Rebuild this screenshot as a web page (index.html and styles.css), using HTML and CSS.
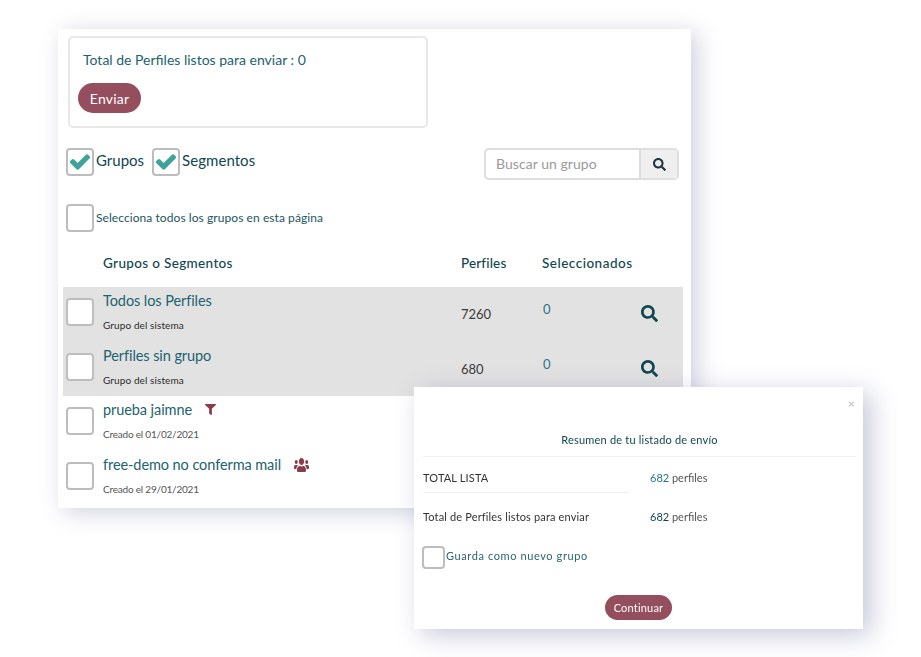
FILE: index.html
```html
<!DOCTYPE html>
<html lang="es">
<head>
    <meta charset="UTF-8">
    <meta name="viewport" content="width=device-width, initial-scale=1.0">
    <title>Resumen de envío</title>
    <link rel="stylesheet" href="styles.css">
</head>
<body>
    <svg class="icon-defs" aria-hidden="true">
        <symbol id="i-search" viewBox="0 0 512 512"><path d="M505 442.7L405.3 343c-4.5-4.5-10.6-7-17-7H372c27.6-35.3 44-79.7 44-128C416 93.1 322.9 0 208 0S0 93.1 0 208s93.1 208 208 208c48.3 0 92.7-16.4 128-44v16.3c0 6.4 2.5 12.5 7 17l99.7 99.7c9.4 9.4 24.6 9.4 33.9 0l28.3-28.3c9.4-9.4 9.4-24.6.1-34zM208 336c-70.7 0-128-57.2-128-128 0-70.7 57.2-128 128-128 70.7 0 128 57.2 128 128 0 70.7-57.2 128-128 128z"/></symbol>
        <symbol id="i-check" viewBox="-20 -20 552 552"><path d="M173.898 439.404l-166.4-166.4c-9.997-9.997-9.997-26.206 0-36.204l36.203-36.204c9.997-9.998 26.207-9.998 36.204 0L192 312.69 432.095 72.596c9.997-9.997 26.207-9.997 36.204 0l36.203 36.204c9.997 9.997 9.997 26.206 0 36.204l-294.4 294.401c-9.998 9.997-26.207 9.997-36.204-.001z"/></symbol>
        <symbol id="i-filter" viewBox="0 0 512 512"><path d="M487.976 0H24.028C2.71 0-8.047 25.866 7.058 40.971L192 225.941V432c0 7.831 3.821 15.17 10.237 19.662l80 55.98C298.02 518.69 320 507.493 320 487.98V225.941l184.947-184.97C520.021 25.896 509.338 0 487.976 0z"/></symbol>
        <symbol id="i-users" viewBox="0 32 640 448" preserveAspectRatio="none"><path d="M96 224c35.3 0 64-28.7 64-64s-28.7-64-64-64-64 28.7-64 64 28.7 64 64 64zm448 0c35.3 0 64-28.7 64-64s-28.7-64-64-64-64 28.7-64 64 28.7 64 64 64zm32 32h-64c-17.6 0-33.5 7.1-45.1 18.6 40.3 22.1 68.9 62 75.1 109.4h66c17.7 0 32-14.3 32-32v-32c0-35.3-28.7-64-64-64zm-256 0c61.9 0 112-50.1 112-112S381.9 32 320 32 208 82.1 208 144s50.1 112 112 112zm76.8 32h-8.3c-20.8 10-43.9 16-68.5 16s-47.6-6-68.5-16h-8.3C179.6 288 128 339.6 128 403.2V432c0 26.5 21.5 48 48 48h288c26.5 0 48-21.5 48-48v-28.8c0-63.6-51.6-115.2-115.2-115.2zm-223.7-13.4C161.5 263.1 145.6 256 128 256H64c-35.3 0-64 28.7-64 64v32c0 17.7 14.3 32 32 32h65.9c6.3-47.4 34.9-87.3 75.2-109.4z"/></symbol>
    </svg>

    <div class="card">
        <div class="send-box">
            <p class="send-total">Total de Perfiles listos para enviar : 0</p>
            <button class="btn-send">Enviar</button>
        </div>

        <div class="filters">
            <span class="box"><svg class="icon-check"><use href="#i-check"/></svg></span>
            <span class="filter-label">Grupos</span>
            <span class="box box-second"><svg class="icon-check"><use href="#i-check"/></svg></span>
            <span class="filter-label filter-label-narrow">Segmentos</span>
            <div class="search">
                <span class="search-text">Buscar un grupo</span>
                <span class="search-btn"><svg class="icon-search-small"><use href="#i-search"/></svg></span>
            </div>
        </div>

        <div class="select-all">
            <span class="box"></span>
            <span class="select-all-label">Selecciona todos los grupos en esta página</span>
        </div>

        <div class="table-head">
            <span class="col-name">Grupos o Segmentos</span>
            <span class="col-count">Perfiles</span>
            <span>Seleccionados</span>
        </div>

        <div class="row row-grey">
            <span class="box"></span>
            <div class="row-info">
                <div class="row-title">Todos los Perfiles</div>
                <div class="row-sub row-sub-dark">Grupo del sistema</div>
            </div>
            <span class="row-count">7260</span>
            <span class="row-selected">0</span>
            <svg class="icon-search"><use href="#i-search"/></svg>
        </div>
        <div class="row row-grey">
            <span class="box"></span>
            <div class="row-info">
                <div class="row-title">Perfiles sin grupo</div>
                <div class="row-sub row-sub-dark">Grupo del sistema</div>
            </div>
            <span class="row-count">680</span>
            <span class="row-selected">0</span>
            <svg class="icon-search"><use href="#i-search"/></svg>
        </div>
        <div class="row">
            <span class="box"></span>
            <div class="row-info">
                <div class="row-title">prueba jaimne <svg class="icon-filter"><use href="#i-filter"/></svg></div>
                <div class="row-sub">Creado el 01/02/2021</div>
            </div>
        </div>
        <div class="row">
            <span class="box"></span>
            <div class="row-info">
                <div class="row-title">free-demo no conferma mail <svg class="icon-users"><use href="#i-users"/></svg></div>
                <div class="row-sub">Creado el 29/01/2021</div>
            </div>
        </div>
    </div>

    <div class="modal">
        <div class="modal-close">×</div>
        <div class="modal-title">Resumen de tu listado de envío</div>
        <div class="modal-line">
            <span class="modal-label modal-label-total">TOTAL LISTA</span>
            <span class="modal-value"><span class="modal-num">682</span> perfiles</span>
        </div>
        <div class="modal-line">
            <span class="modal-label">Total de Perfiles listos para enviar</span>
            <span class="modal-value"><span class="modal-num modal-num-dark">682</span> perfiles</span>
        </div>
        <div class="modal-save">
            <span class="box box-small"></span>
            <span class="modal-save-label">Guarda como nuevo grupo</span>
        </div>
        <div class="modal-actions">
            <button class="btn-continue">Continuar</button>
        </div>
    </div>
</body>
</html>
```

FILE: styles.css
```css
body {
    font-family: "Lato", "Open Sans", sans-serif;
    background-color: #fff;
    margin: 0;
    padding: 29px 0 0 58px;
    height: 628px;
    overflow: hidden;
    color: #0f4650;
}
.icon-defs {
    display: none;
}
.card {
    background-color: #fff;
    width: 633px;
    height: 479px;
    padding: 7px 0 0 5px;
    box-sizing: border-box;
    box-shadow: 6px 4px 22px rgba(105, 110, 160, 0.32);
}
.send-box {
    width: 360px;
    height: 92px;
    margin-left: 5px;
    box-sizing: border-box;
    border: 2px solid #e8e8e8;
    border-radius: 5px;
    padding: 12px 0 0 8px;
}
.send-total {
    margin: 0 0 13px 5px;
    font-size: 14px;
    line-height: 20px;
    color: #1c6270;
}
.btn-send {
    background-color: #944e5e;
    color: #fff;
    border: none;
    border-radius: 15px;
    width: 63px;
    height: 30px;
    padding: 0;
    font-family: inherit;
    font-size: 14px;
    letter-spacing: 0.2px;
}
.box {
    display: flex;
    align-items: center;
    justify-content: center;
    flex: none;
    width: 28px;
    height: 28px;
    box-sizing: border-box;
    border: 2px solid #bdbdbd;
    border-radius: 4px;
    background-color: #fff;
}
.icon-check {
    width: 20px;
    height: 20px;
    fill: #3fa39b;
    stroke: #3fa39b;
    stroke-width: 40px;
}
.filters {
    display: flex;
    align-items: flex-start;
    height: 32px;
    margin: 20px 0 0 3px;
}
.filter-label {
    margin-left: 2px;
    font-size: 15px;
    line-height: 25px;
}
.filter-label-narrow {
    letter-spacing: 0.05px;
}
.box-second {
    margin-left: 8px;
}
.search {
    display: flex;
    width: 195px;
    height: 32px;
    box-sizing: border-box;
    margin-left: auto;
    margin-right: 12px;
    border: 2px solid #dedede;
    border-radius: 5px;
}
.search-text {
    flex-grow: 1;
    padding-left: 10px;
    font-size: 14px;
    line-height: 28px;
    color: #9a9a9a;
    letter-spacing: 0.05px;
}
.search-btn {
    display: flex;
    align-items: center;
    justify-content: center;
    width: 36px;
    background-color: #efefef;
    border-left: 2px solid #dedede;
}
.icon-search-small {
    width: 13px;
    height: 13px;
    fill: #22343c;
}
.select-all {
    display: flex;
    align-items: center;
    margin: 24px 0 0 3px;
}
.select-all-label {
    margin-left: 2px;
    padding-bottom: 2px;
    font-size: 12px;
    color: #1c5560;
    letter-spacing: 0.07px;
}
.table-head {
    display: flex;
    align-items: center;
    height: 55px;
    padding-top: 6px;
    box-sizing: border-box;
    margin-left: 40px;
    font-size: 13.5px;
    font-weight: 500;
    letter-spacing: 0.5px;
    color: #0f4650;
}
.col-name {
    width: 358px;
    letter-spacing: 0.35px;
}
.col-count {
    width: 81px;
    letter-spacing: 0.15px;
}
.row {
    display: flex;
    height: 54.5px;
    padding-left: 3px;
}
.row-grey {
    width: 620px;
    box-sizing: border-box;
    background-color: #e2e2e2;
}
.row > .box {
    margin-top: 11px;
}
.row-info {
    width: 358px;
    margin-left: 9px;
    padding-top: 5px;
}
.row-title {
    font-size: 14.5px;
    line-height: 18px;
    color: #1c6270;
    letter-spacing: -0.08px;
}
.row-sub {
    margin-top: 8px;
    font-size: 10px;
    line-height: 14px;
    color: #555;
    letter-spacing: -0.2px;
}
.row-sub-dark {
    color: #2b2b2b;
    letter-spacing: 0.1px;
}
.row-count {
    width: 82px;
    padding-top: 19px;
    font-size: 13px;
    line-height: 17px;
    color: #3a3a3a;
}
.row-selected {
    width: 98px;
    padding-top: 14px;
    font-size: 13px;
    line-height: 17px;
    color: #2a7488;
}
.icon-search {
    width: 17px;
    height: 17px;
    margin-top: 18px;
    fill: #0f4650;
}
.icon-filter {
    width: 11px;
    height: 11px;
    margin-left: 9px;
    vertical-align: 0;
    fill: #8c3a4c;
}
.icon-users {
    width: 15px;
    height: 14px;
    margin-left: 9px;
    vertical-align: -2px;
    fill: #8c3a4c;
}
.modal {
    position: absolute;
    left: 414px;
    top: 387px;
    width: 449px;
    height: 242px;
    box-sizing: border-box;
    padding: 0 7px 0 9px;
    background-color: #fff;
    box-shadow: 8px 6px 24px rgba(105, 110, 160, 0.38);
    color: #333;
    filter: blur(0.3px);
}
.modal-close {
    height: 31px;
    padding: 7px 1px 0 0;
    box-sizing: border-box;
    text-align: right;
    font-size: 12px;
    line-height: 20px;
    font-weight: 700;
    color: #c6c6c6;
}
.modal-title {
    height: 39px;
    box-sizing: border-box;
    padding-top: 14px;
    border-bottom: 1px solid #f0f0f0;
    text-align: center;
    font-size: 11px;
    line-height: 16px;
    color: #0f4650;
    letter-spacing: 0.2px;
}
.modal-line {
    display: flex;
    align-items: flex-start;
    height: 38px;
    font-size: 11px;
    line-height: 16px;
    letter-spacing: 0.15px;
}
.modal-label {
    width: 227px;
    padding-top: 14px;
}
.modal-label-total {
    width: 205px;
    height: 36px;
    box-sizing: border-box;
    padding-top: 13px;
    margin-right: 22px;
    border-bottom: 1px solid #eee;
}
.modal-value {
    padding-top: 13px;
    color: #555;
    letter-spacing: 0;
}
.modal-line + .modal-line .modal-value {
    padding-top: 14px;
}
.modal-num {
    color: #2a7488;
}
.modal-num-dark {
    color: #0f4650;
}
.modal-save {
    display: flex;
    align-items: center;
    gap: 1px;
    margin-top: 13px;
    font-size: 11px;
    letter-spacing: 0.6px;
    color: #2b6470;
}
.modal-save-label {
    padding-bottom: 4px;
}
.box-small {
    width: 23px;
    height: 23px;
    margin-left: -1px;
}
.modal-actions {
    margin-top: 26px;
    padding-right: 2px;
    text-align: center;
}
.btn-continue {
    display: inline-block;
    vertical-align: top;
    background-color: #944e5e;
    color: #fff;
    border: none;
    border-radius: 13px;
    width: 67px;
    height: 25px;
    padding: 0;
    font-family: inherit;
    font-size: 11px;
    letter-spacing: 0.2px;
}
```
